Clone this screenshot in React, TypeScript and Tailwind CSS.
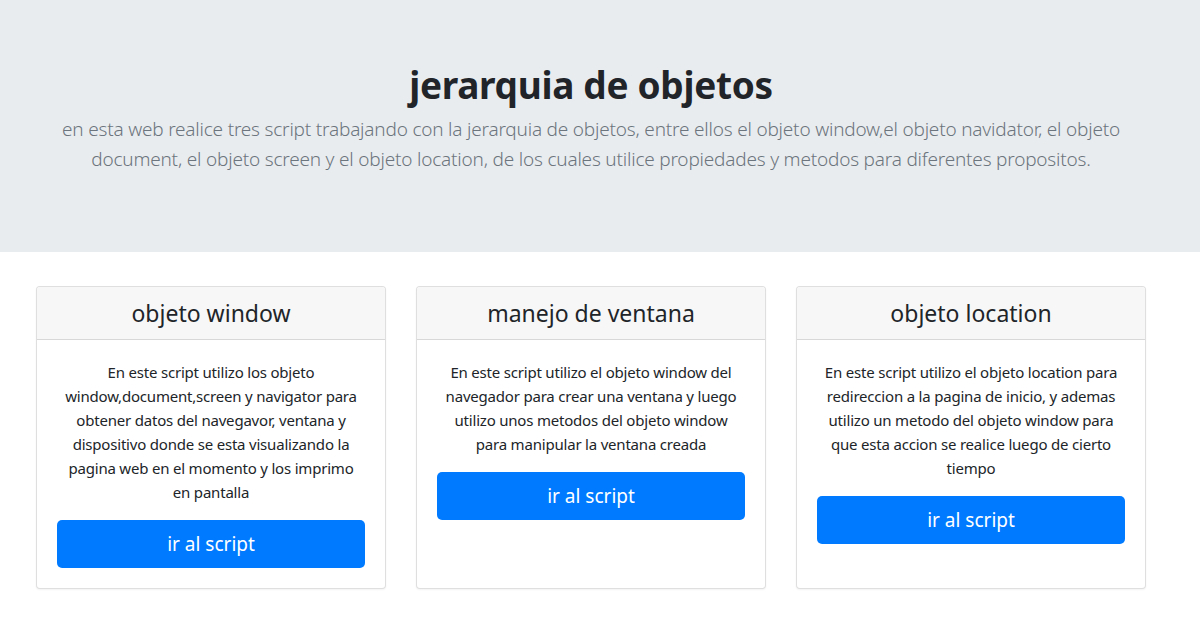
import React from "react";

const cards = [
  {
    title: "objeto window",
    lines: [
      "En este script utilizo los objeto",
      "window,document,screen y navigator para",
      "obtener datos del navegavor, ventana y",
      "dispositivo donde se esta visualizando la",
      "pagina web en el momento y los imprimo",
      "en pantalla",
    ],
  },
  {
    title: "manejo de ventana",
    lines: [
      "En este script utilizo el objeto window del",
      "navegador para crear una ventana y luego",
      "utilizo unos metodos del objeto window",
      "para manipular la ventana creada",
    ],
  },
  {
    title: "objeto location",
    lines: [
      "En este script utilizo el objeto location para",
      "redireccion a la pagina de inicio, y ademas",
      "utilizo un metodo del objeto window para",
      "que esta accion se realice luego de cierto",
      "tiempo",
    ],
  },
];

export default function App() {
  return (
    <div className="min-h-[629px] bg-white text-[#212529] font-['Noto_Sans','Open_Sans',sans-serif]">
      <div className="bg-[#e9ecef] h-[252px] pt-[61px] pr-[18px]">
        <div className="w-[1110px] mx-auto text-center">
          <h1 className="text-[37px] leading-[48px] font-bold text-[#212529] tracking-[-0.3px]">jerarquia de objetos</h1>
          <p className="mt-[6px] text-[19px] leading-[29.5px] font-light text-[#6c757d] tracking-[-0.2px]">
            en esta web realice tres script trabajando con la jerarquia de objetos, entre ellos el objeto window,el objeto navidator, el objeto
            <br />
            document, el objeto screen y el objeto location, de los cuales utilice propiedades y metodos para diferentes propositos.
          </p>
        </div>
      </div>
      <div className="pt-[34px] pr-[18px]">
        <div className="w-[1110px] mx-auto flex gap-[30px]">
          {cards.map((c) => (
            <div
              key={c.title}
              className="w-[350px] h-[303px] flex flex-col border border-[rgba(0,0,0,0.125)] rounded-[4px] bg-white shadow-[0_1px_2px_rgba(0,0,0,0.05)] overflow-hidden"
            >
              <div className="h-[53px] flex items-center justify-center bg-[#f7f7f7] border-b border-[rgba(0,0,0,0.125)]">
                <span className="text-[23px] leading-[28px] text-[#212529]">{c.title}</span>
              </div>
              <div className="p-[20px] text-center">
                <p className="text-[15px] leading-[24px] text-[#212529] tracking-[-0.2px]">
                  {c.lines.map((l, i) => (
                    <React.Fragment key={i}>
                      {l}
                      {i < c.lines.length - 1 && <br />}
                    </React.Fragment>
                  ))}
                </p>
                <button className="mt-[16px] w-full h-[48px] rounded-[5px] bg-[#007bff] text-white text-[19px] leading-[30px]">
                  ir al script
                </button>
              </div>
            </div>
          ))}
        </div>
      </div>
    </div>
  );
}
